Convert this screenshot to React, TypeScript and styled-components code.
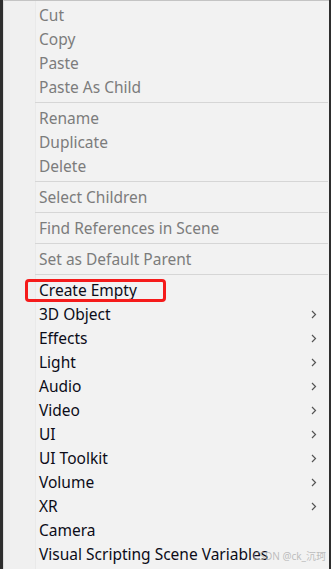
import React from 'react';
import styled, { createGlobalStyle } from 'styled-components';

const GlobalStyle = createGlobalStyle`
  html, body {
    margin: 0;
    padding: 0;
    background: #2e2e2e;
  }
  #root {
    height: 569px;
    overflow: hidden;
  }
`;

const Frame = styled.div`
  display: flex;
  height: 569px;
  padding: 0 2px 0 3px;
  box-sizing: border-box;
`;

const Menu = styled.ul`
  position: relative;
  flex: 1;
  margin: 0;
  padding: 2px 0 0;
  list-style: none;
  border-top: 1px solid #c4c4c4;
  border-left: 1px solid #dcdcdc;
  background: linear-gradient(to right, #f0f0f0 31px, #e9e9e9 31px 32px, #f2f2f2 32px);
  font-family: "Noto Sans", "Open Sans", sans-serif;
  font-size: 15.5px;
  overflow: hidden;
`;

const Item = styled.li<{ $disabled?: boolean }>`
  position: relative;
  display: flex;
  align-items: center;
  height: 24px;
  padding: 0 12px 0 35px;
  color: ${(p) => (p.$disabled ? '#7c7c7c' : '#0c0c18')};
  white-space: nowrap;
`;

const Label = styled.span`
  flex: 1;
  line-height: 24px;
`;

const Separator = styled.li`
  height: 7px;
  display: flex;
  align-items: center;
  margin: 0 1px 0 31px;

  &::after {
    content: '';
    flex: 1;
    height: 1px;
    background: #d6d6d6;
  }
`;

const Highlight = styled.span`
  position: absolute;
  left: 21px;
  top: 1px;
  width: 141px;
  height: 23px;
  box-sizing: border-box;
  border: 3px solid #f51b1b;
  border-radius: 4px;
  pointer-events: none;
`;

const Watermark = styled.span`
  position: absolute;
  right: 3px;
  bottom: 6px;
  font-family: "Noto Sans", "Noto Sans CJK SC", sans-serif;
  font-size: 10px;
  color: rgba(170, 170, 170, 0.75);
`;

const Chevron = () => (
  <svg width="6" height="9" viewBox="0 0 6 9">
    <path d="M1 1 L4.5 4.5 L1 8" fill="none" stroke="#555" strokeWidth="1.2" />
  </svg>
);

type Entry =
  | { sep: true }
  | { label: string; disabled?: boolean; sub?: boolean; mark?: boolean };

const entries: Entry[] = [
  { label: 'Cut', disabled: true },
  { label: 'Copy', disabled: true },
  { label: 'Paste', disabled: true },
  { label: 'Paste As Child', disabled: true },
  { sep: true },
  { label: 'Rename', disabled: true },
  { label: 'Duplicate', disabled: true },
  { label: 'Delete', disabled: true },
  { sep: true },
  { label: 'Select Children', disabled: true },
  { sep: true },
  { label: 'Find References in Scene', disabled: true },
  { sep: true },
  { label: 'Set as Default Parent', disabled: true },
  { sep: true },
  { label: 'Create Empty', mark: true },
  { label: '3D Object', sub: true },
  { label: 'Effects', sub: true },
  { label: 'Light', sub: true },
  { label: 'Audio', sub: true },
  { label: 'Video', sub: true },
  { label: 'UI', sub: true },
  { label: 'UI Toolkit', sub: true },
  { label: 'Volume', sub: true },
  { label: 'XR', sub: true },
  { label: 'Camera' },
  { label: 'Visual Scripting Scene Variables' },
];

export default function App() {
  return (
    <>
      <GlobalStyle />
      <Frame>
        <Menu>
          {entries.map((e, i) =>
            'sep' in e ? (
              <Separator key={i} />
            ) : (
              <Item key={i} $disabled={e.disabled}>
                {e.mark && <Highlight />}
                <Label>{e.label}</Label>
                {e.sub && <Chevron />}
              </Item>
            )
          )}
          <Watermark>CSDN @ck_沉珂</Watermark>
        </Menu>
      </Frame>
    </>
  );
}
